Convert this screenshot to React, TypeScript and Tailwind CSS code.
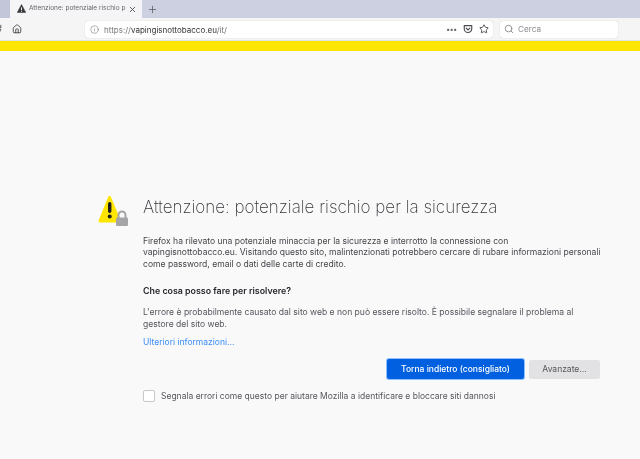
import { Home, Info, Search, Star, RotateCw, Plus, X } from 'lucide-react';

function TabStrip() {
  return (
    <div className="flex h-[18px] bg-[#cdd0e0]">
      <div className="w-[10px] bg-[#c3c6d8]" />
      <div className="relative flex w-[132px] items-center bg-[#f5f5f7] pl-[19px] pr-[5px]">
        <svg viewBox="0 0 16 16" className="absolute left-[7px] top-[4px] h-[9px] w-[9px]">
          <path d="M8 1 L15.5 15 H0.5 Z" fill="#38383d" stroke="#38383d" strokeLinejoin="round" />
          <rect x="7.2" y="6" width="1.6" height="5" fill="#fff" />
          <rect x="7.2" y="12" width="1.6" height="1.6" fill="#fff" />
        </svg>
        <span className="flex-1 whitespace-nowrap text-[6.5px] text-[#66666c]">Attenzione: potenziale rischio p</span>
        <X className="h-[9px] w-[9px] shrink-0 text-[#444]" strokeWidth={2.2} />
      </div>
      <div className="flex w-[20px] items-center justify-center">
        <Plus className="h-[11px] w-[11px] text-[#55555c]" strokeWidth={1.6} />
      </div>
    </div>
  );
}

function Toolbar() {
  return (
    <div className="flex h-[23px] items-center border-b border-[#e3e3e5] bg-[#f5f5f6]">
      <div className="relative h-[12px] w-[12px] overflow-hidden">
        <RotateCw className="absolute left-[-8px] top-[1px] h-[10px] w-[10px] text-[#444]" strokeWidth={2} />
      </div>
      <Home className="h-[10px] w-[10px] text-[#38383d]" strokeWidth={2} />
      <div className="ml-[63px] flex h-[17px] w-[408px] items-center rounded-[3px] bg-white pl-[5px] pr-[4px] shadow-[0_0_1px_#b8b8bd]">
        <Info className="h-[9px] w-[9px] text-[#77777c]" strokeWidth={1.5} />
        <span className="ml-[5px] flex-1 pt-[1px] text-[8px] text-[#77777c]">
          https://<span className="text-[#333338]">vapingisnottobacco.eu</span>/it/
        </span>
        <span className="text-[7px] font-bold leading-none tracking-[0.2px] text-[#66666c]">•••</span>
        <svg viewBox="0 0 16 16" className="ml-[6px] h-[10px] w-[10px]" fill="none" stroke="#4a4a4f" strokeWidth="1.8">
          <path d="M2 2.5 H14 V7.5 A6 6 0 0 1 2 7.5 Z" strokeLinejoin="round" />
          <path d="M5 6.5 L8 9.5 L11 6.5" strokeLinecap="round" />
        </svg>
        <Star className="ml-[6px] h-[10px] w-[10px] text-[#38383d]" strokeWidth={2} />
      </div>
      <div className="ml-[7px] flex h-[17px] w-[118px] items-center rounded-[3px] bg-white pl-[4px] shadow-[0_0_1px_#b8b8bd]">
        <Search className="h-[10px] w-[10px] text-[#77777c]" strokeWidth={1.8} />
        <span className="ml-[4px] pt-[1px] text-[8.2px] text-[#8a8a90]">Cerca</span>
      </div>
    </div>
  );
}

function WarningIcon() {
  return (
    <svg viewBox="0 0 32 32" className="h-[32px] w-[32px] shrink-0">
      <path d="M11.5 2.5 L21.5 26 H2 Z" fill="#ffe600" stroke="#ffe600" strokeWidth="3" strokeLinejoin="round" />
      <rect x="10" y="7" width="3.4" height="11" rx="1.7" fill="#1f1f1f" />
      <circle cx="11.7" cy="21.5" r="2" fill="#1f1f1f" />
      <path d="M20.5 23 V20 A3.5 3.5 0 0 1 27.5 20 V23" fill="none" stroke="#a5a5a8" strokeWidth="2" />
      <rect x="18" y="22.5" width="12" height="8.5" rx="1.2" fill="#a5a5a8" />
    </svg>
  );
}

export default function App() {
  return (
    <div className="h-[459px] w-[640px] overflow-hidden bg-[#f9f9fa] font-['Inter',sans-serif] blur-[0.5px]">
      <TabStrip />
      <Toolbar />
      <div className="h-[10px] bg-[#ffe600]" />
      <div className="ml-[98px] mt-[142px] flex">
        <div className="w-[45px] pt-[2px]">
          <WarningIcon />
        </div>
        <div className="w-[460px]">
          <h1 className="text-[17px] font-extralight leading-[28px] text-[#38383d]">Attenzione: potenziale rischio per la sicurezza</h1>
          <p className="mt-[14.5px] text-[8.55px] leading-[11.5px] text-[#45454b]">
            Firefox ha rilevato una potenziale minaccia per la sicurezza e interrotto la connessione con
            <br />
            vapingisnottobacco.eu. Visitando questo sito, malintenzionati potrebbero cercare di rubare informazioni personali
            <br />
            come password, email o dati delle carte di credito.
          </p>
          <h2 className="mt-[14.5px] text-[8.85px] font-semibold leading-[12px] text-[#26262b]">Che cosa posso fare per risolvere?</h2>
          <p className="mt-[9px] text-[8.55px] leading-[12px] text-[#55555c]">
            L'errore è probabilmente causato dal sito web e non può essere risolto. È possibile segnalare il problema al
            <br />
            gestore del sito web.
          </p>
          <a className="mt-[6px] block text-[8.5px] leading-[12px] text-[#3b8df5]">Ulteriori informazioni...</a>
          <div className="mt-[11.5px] flex items-center justify-end gap-[5px] pr-[3px]">
            <button className="h-[20px] w-[137px] rounded-[2px] bg-[#0060df] text-[8.5px] font-medium text-white shadow-[0_0_0_1px_#8fc0ff]">Torna indietro (consigliato)</button>
            <button className="h-[19px] w-[71px] rounded-[2px] bg-[#e2e2e4] text-[8.5px] text-[#55555c]">Avanzate...</button>
          </div>
          <label className="mt-[10.5px] flex items-center">
            <span className="h-[12px] w-[12px] rounded-[2px] border border-[#c8c8cc] bg-white" />
            <span className="ml-[6px] text-[8.5px] text-[#55555c]">Segnala errori come questo per aiutare Mozilla a identificare e bloccare siti dannosi</span>
          </label>
        </div>
      </div>
    </div>
  );
}
